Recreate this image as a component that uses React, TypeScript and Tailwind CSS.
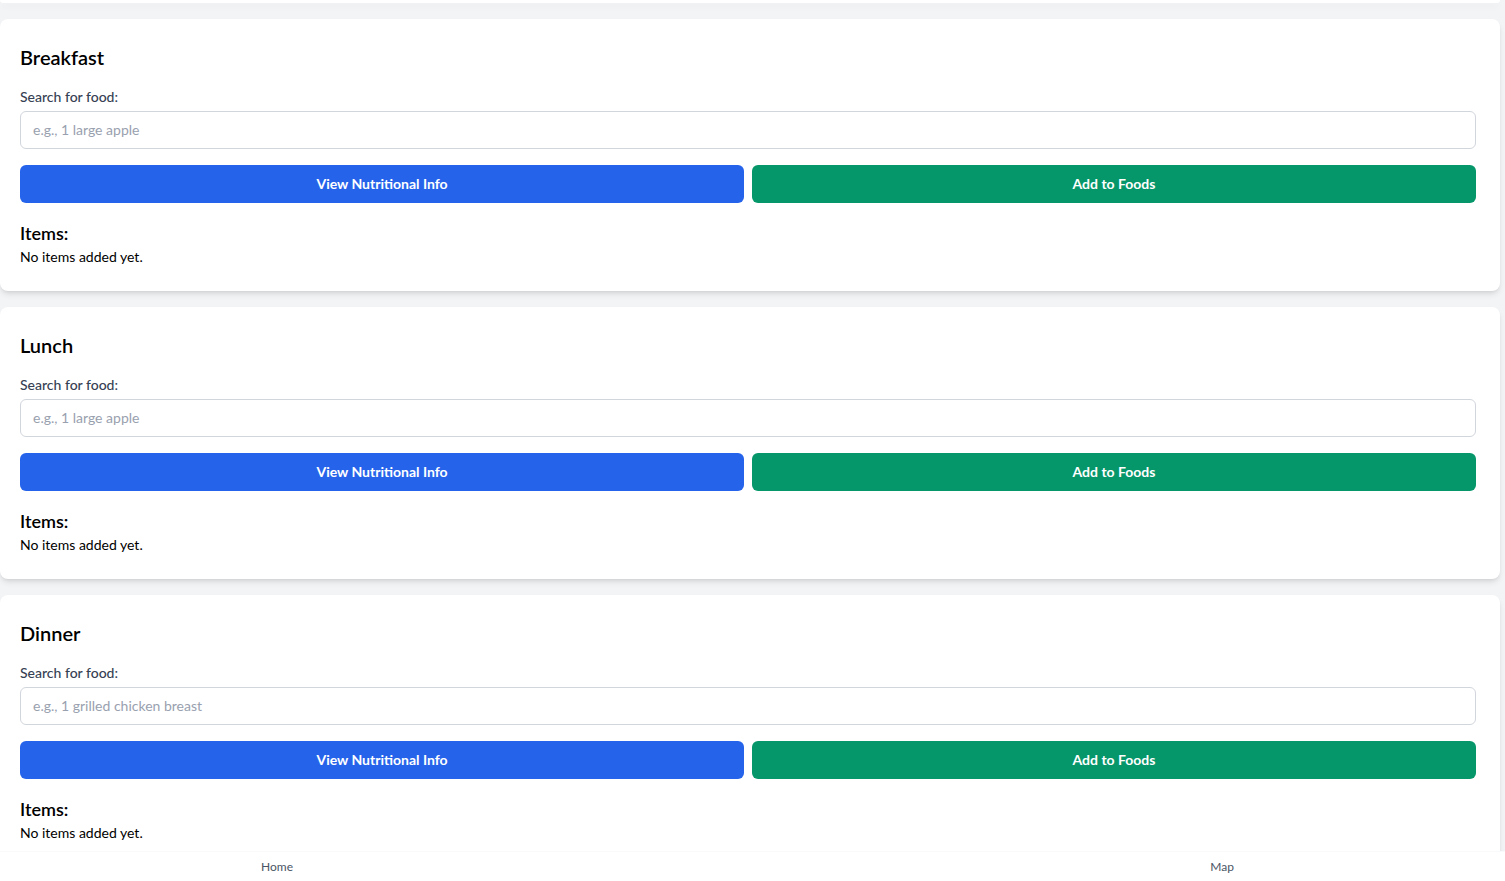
import React from "react";

const meals = [
  { title: "Breakfast", placeholder: "e.g., 1 large apple" },
  { title: "Lunch", placeholder: "e.g., 1 large apple" },
  { title: "Dinner", placeholder: "e.g., 1 grilled chicken breast" },
];

const MealCard = ({ title, placeholder }: { title: string; placeholder: string }) => {
  return (
    <div className="w-[1500px] bg-white rounded-lg shadow-md pl-5 pr-6 py-6">
      <h2 className="text-xl font-semibold text-black mb-4">{title}</h2>
      <label className="block text-sm font-medium text-gray-700 mb-1">
        Search for food:
      </label>
      <input
        type="text"
        placeholder={placeholder}
        className="block w-full border border-gray-300 rounded-md px-3 py-2 text-sm text-gray-700 placeholder:text-gray-400"
      />
      <div className="flex gap-2 mt-4">
        <button className="flex-1 h-[38px] rounded-md bg-[#2563eb] text-white text-sm font-bold">
          View Nutritional Info
        </button>
        <button className="flex-1 h-[38px] rounded-md bg-[#059669] text-white text-sm font-bold">
          Add to Foods
        </button>
      </div>
      <h3 className="mt-4 text-lg font-semibold text-black">Items:</h3>
      <p className="text-sm text-black">No items added yet.</p>
    </div>
  );
};

export default function App() {
  return (
    <div
      className="min-h-screen bg-gray-100 pb-10"
      style={{ fontFamily: 'Lato, "Noto Sans", sans-serif' }}
    >
      {/* previous card, scrolled off */}
      <div className="w-[1500px] h-[3px] bg-white rounded-b-lg shadow-md" />
      <div className="flex flex-col gap-4 mt-4">
        {meals.map((m) => (
          <MealCard key={m.title} title={m.title} placeholder={m.placeholder} />
        ))}
      </div>

      {/* bottom nav */}
      <nav className="fixed bottom-0 left-0 right-0 h-[30px] bg-white border-t border-gray-50 flex items-center justify-between pl-[261px] pr-[271px]">
        <span className="text-xs text-gray-600">Home</span>
        <span className="text-xs text-gray-600">Map</span>
      </nav>
    </div>
  );
}
